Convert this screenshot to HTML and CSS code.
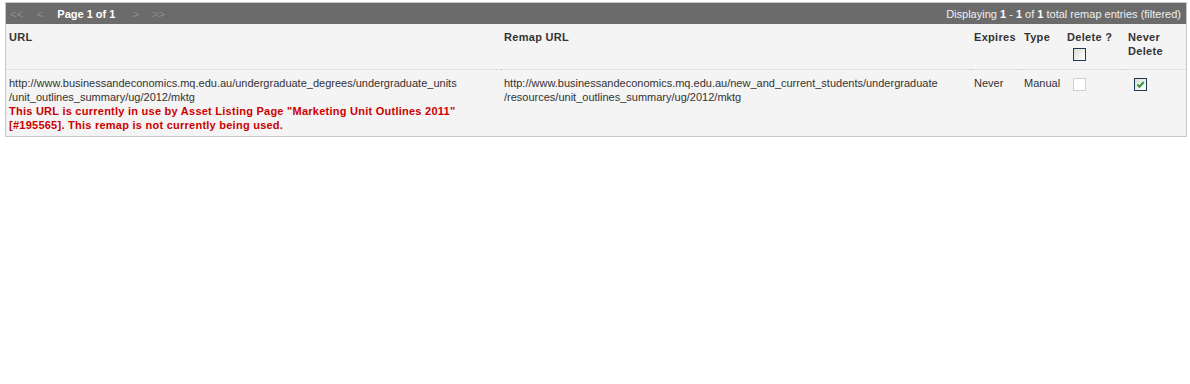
FILE: index.html
```html
<!DOCTYPE html>
<html>
<head>
<meta charset="utf-8">
<link rel="stylesheet" href="styles.css">
</head>
<body>
<div class="listing">
  <div class="pager">
    <div class="pager-nav">
      <span class="nav-link nav-first">&lt;&lt;</span>
      <span class="nav-link nav-prev">&lt;</span>
      <span class="page-label">Page 1 of 1</span>
      <span class="nav-link nav-next">&gt;</span>
      <span class="nav-link nav-last">&gt;&gt;</span>
    </div>
    <div class="pager-info">Displaying <b>1</b> - <b>1</b> of <b>1</b> total remap entries (filtered)</div>
  </div>
  <table class="remaps">
    <thead>
      <tr>
        <th class="col-url">URL</th>
        <th class="col-remap">Remap URL</th>
        <th class="col-expires">Expires</th>
        <th class="col-type">Type</th>
        <th class="col-delete">Delete ?<br><span class="cb cb-head"></span></th>
        <th class="col-never">Never<br>Delete</th>
      </tr>
    </thead>
    <tbody>
      <tr>
        <td class="col-url">http://www.businessandeconomics.mq.edu.au/undergraduate_degrees/undergraduate_units<br>/unit_outlines_summary/ug/2012/mktg<br><span class="warn">This URL is currently in use by Asset Listing Page "Marketing Unit Outlines 2011"<br>[#195565]. This remap is not currently being used.</span></td>
        <td class="col-remap">http://www.businessandeconomics.mq.edu.au/new_and_current_students/undergraduate<br>/resources/unit_outlines_summary/ug/2012/mktg</td>
        <td class="col-expires">Never</td>
        <td class="col-type">Manual</td>
        <td class="col-delete"><span class="cb cb-disabled"></span></td>
        <td class="col-never"><span class="cb cb-checked"><svg viewBox="0 0 13 13" width="13" height="13"><path d="M3.5 6.5 L5.5 8.8 L9.8 4" fill="none" stroke="#2f9a2f" stroke-width="2"/></svg></span></td>
      </tr>
    </tbody>
  </table>
</div>
</body>
</html>
```
FILE: styles.css
```css
html, body {
  margin: 0;
  padding: 0;
  background: #ffffff;
}
body {
  font-family: "Liberation Sans", Arial, sans-serif;
  font-size: 11px;
  color: #333333;
}
.listing {
  margin: 2px 3px 0 5px;
  border: 1px solid #c8c8c8;
  background: #f4f4f4;
}
.pager {
  display: flex;
  justify-content: space-between;
  align-items: center;
  height: 21px;
  background: #6b6b6b;
  color: #ffffff;
  padding: 0 5px 0 4px;
}
.pager-nav {
  display: flex;
  align-items: center;
}
.nav-link {
  color: #8e8e8e;
}
.nav-first { margin-right: 14px; }
.nav-prev { margin-right: 14px; }
.nav-next { margin-right: 13px; }
.page-label {
  font-weight: bold;
  color: #ffffff;
  margin-right: 17px;
}
.pager-info {
  color: #f0f0f0;
}
.pager-info b {
  color: #ffffff;
}
.remaps {
  width: 100%;
  border-collapse: collapse;
}
.remaps th {
  text-align: left;
  vertical-align: top;
  font-weight: bold;
  color: #333333;
  padding: 6px 3px 7px 3px;
  height: 32px;
  line-height: 14px;
  letter-spacing: 0.3px;
  border-bottom: 1px dotted #cfcfcf;
}
.remaps td {
  vertical-align: top;
  padding: 6px 3px 4px 3px;
  line-height: 14px;
  color: #333333;
}
.col-url { width: 489px; }
.col-remap { width: 464px; }
.col-expires { width: 44px; }
.col-type { width: 37px; }
.col-delete { width: 55px; }
.warn {
  color: #cc0000;
  font-weight: bold;
  letter-spacing: 0.25px;
}
.cb {
  display: inline-block;
  width: 11px;
  height: 11px;
  border: 1px solid #1c3a57;
  background: linear-gradient(135deg, #dcdcd6, #ffffff);
  vertical-align: top;
  position: relative;
  margin-left: 6px;
}
.cb-head {
  margin-top: 4px;
}
.cb-disabled {
  border-color: #cfcfcf;
  background: #ffffff;
  margin-top: 2px;
}
.cb-checked {
  margin-top: 2px;
}
.cb-checked svg {
  position: absolute;
  left: -1px;
  top: -1px;
}
```
